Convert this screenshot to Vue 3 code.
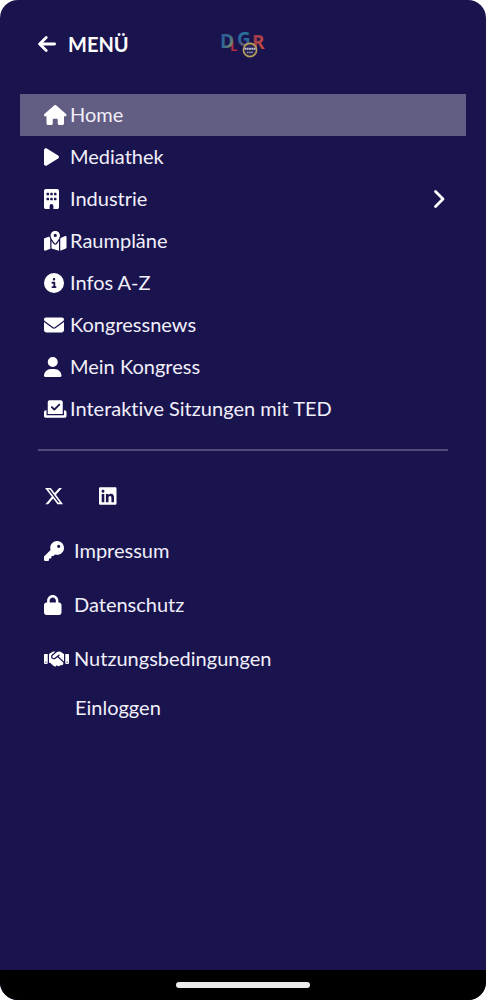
<script setup>
import { ref } from 'vue'

const mainItems = [
  { label: 'Home', w: 576, d: 'M575.8 255.5c0 18-15 32.1-32 32.1h-32l.7 160.2c0 2.7-.2 5.4-.5 8.1V472c0 22.1-17.9 40-40 40H456c-1.1 0-2.2 0-3.3-.1c-1.4 .1-2.8 .1-4.2 .1H416 392c-22.1 0-40-17.9-40-40V448 384c0-17.7-14.3-32-32-32H256c-17.7 0-32 14.3-32 32v64 24c0 22.1-17.9 40-40 40H160 128.1c-1.5 0-3-.1-4.5-.2c-1.2 .1-2.4 .2-3.6 .2H104c-22.1 0-40-17.9-40-40V360c0-.9 0-1.9 .1-2.8V287.6H32c-18 0-32-14-32-32.1c0-9 3-17 10-24L266.4 8c7-7 15-8 22-8s15 2 21 7L564.8 231.5c8 7 12 15 11 24z' },
  { label: 'Mediathek', w: 384, d: 'M73 39c-14.8-9.1-33.4-9.4-48.5-.9S0 62.6 0 80V432c0 17.4 9.4 33.4 24.5 41.9s33.7 8.1 48.5-.9L361 297c14.3-8.7 23-24.2 23-41s-8.7-32.2-23-41L73 39z' },
  { label: 'Industrie', more: true, w: 384, d: 'M48 0C21.5 0 0 21.5 0 48V464c0 26.5 21.5 48 48 48h96V432c0-26.5 21.5-48 48-48s48 21.5 48 48v80h96c26.5 0 48-21.5 48-48V48c0-26.5-21.5-48-48-48H48zM64 240c0-8.8 7.2-16 16-16h32c8.8 0 16 7.2 16 16v32c0 8.8-7.2 16-16 16H80c-8.8 0-16-7.2-16-16V240zm112-16h32c8.8 0 16 7.2 16 16v32c0 8.8-7.2 16-16 16H176c-8.8 0-16-7.2-16-16V240c0-8.8 7.2-16 16-16zm80 16c0-8.8 7.2-16 16-16h32c8.8 0 16 7.2 16 16v32c0 8.8-7.2 16-16 16H272c-8.8 0-16-7.2-16-16V240zM80 96h32c8.8 0 16 7.2 16 16v32c0 8.8-7.2 16-16 16H80c-8.8 0-16-7.2-16-16V112c0-8.8 7.2-16 16-16zm80 16c0-8.8 7.2-16 16-16h32c8.8 0 16 7.2 16 16v32c0 8.8-7.2 16-16 16H176c-8.8 0-16-7.2-16-16V112zM272 96h32c8.8 0 16 7.2 16 16v32c0 8.8-7.2 16-16 16H272c-8.8 0-16-7.2-16-16V112c0-8.8 7.2-16 16-16z' },
  { label: 'Raumpläne', w: 576, d: 'M408 120c0 54.6-73.1 151.9-105.2 192c-7.7 9.6-22 9.6-29.6 0C241.1 271.9 168 174.6 168 120C168 53.7 221.7 0 288 0s120 53.7 120 120zm8 80.4c3.5-6.9 6.7-13.8 9.6-20.6c.5-1.2 1-2.5 1.5-3.7l116-46.4C558.9 123.4 576 135 576 152V422.8c0 9.8-6 18.6-15.1 22.3L416 503V200.4zM137.6 138.3c2.4 14.1 7.2 28.3 12.8 41.5c2.9 6.8 6.1 13.7 9.6 20.6V451.8L32.9 502.7C17.1 509 0 497.4 0 480.4V209.6c0-9.8 6-18.6 15.1-22.3l122.6-49zM327.8 332c13.9-17.4 35.7-45.7 56.2-77V504.3L192 449.4V255c20.5 31.3 42.3 59.6 56.2 77c20.5 25.6 59.1 25.6 79.6 0zM288 152a40 40 0 1 0 0-80 40 40 0 1 0 0 80z' },
  { label: 'Infos A-Z', w: 512, d: 'M256 512A256 256 0 1 0 256 0a256 256 0 1 0 0 512zM216 336h24V272H216c-13.3 0-24-10.7-24-24s10.7-24 24-24h48c13.3 0 24 10.7 24 24v88h8c13.3 0 24 10.7 24 24s-10.7 24-24 24H216c-13.3 0-24-10.7-24-24s10.7-24 24-24zm40-208a32 32 0 1 1 0 64 32 32 0 1 1 0-64z' },
  { label: 'Kongressnews', w: 512, d: 'M48 64C21.5 64 0 85.5 0 112c0 15.1 7.1 29.3 19.2 38.4L236.8 313.6c11.4 8.5 27 8.5 38.4 0L492.8 150.4c12.1-9.1 19.2-23.3 19.2-38.4c0-26.5-21.5-48-48-48H48zM0 176V384c0 35.3 28.7 64 64 64H448c35.3 0 64-28.7 64-64V176L294.4 339.2c-22.8 17.1-54 17.1-76.8 0L0 176z' },
  { label: 'Mein Kongress', w: 448, d: 'M224 256A128 128 0 1 0 224 0a128 128 0 1 0 0 256zm-45.7 48C79.8 304 0 383.8 0 482.3C0 498.7 13.3 512 29.7 512H418.3c16.4 0 29.7-13.3 29.7-29.7C448 383.8 368.2 304 269.7 304H178.3z' },
  { label: 'Interaktive Sitzungen mit TED', w: 576, d: 'M96 80c0-26.5 21.5-48 48-48H432c26.5 0 48 21.5 48 48V384H96V80zm313 47c-9.4-9.4-24.6-9.4-33.9 0l-111 111-47-47c-9.4-9.4-24.6-9.4-33.9 0s-9.4 24.6 0 33.9l64 64c9.4 9.4 24.6 9.4 33.9 0L409 161c9.4-9.4 9.4-24.6 0-33.9zM0 336c0-26.5 21.5-48 48-48H64V416H512V288h16c26.5 0 48 21.5 48 48v96c0 26.5-21.5 48-48 48H48c-26.5 0-48-21.5-48-48V336z' },
]

const socialItems = [
  { label: 'X', w: 512, d: 'M389.2 48h70.6L305.6 224.2 487 464H345L233.7 318.6 106.5 464H35.8L200.7 275.5 26.8 48H172.4L272.9 180.9 389.2 48zM364.4 421.8h39.1L151.1 88h-42L364.4 421.8z' },
  { label: 'LinkedIn', w: 448, d: 'M416 32H31.9C14.3 32 0 46.5 0 64.3v383.4C0 465.5 14.3 480 31.9 480H416c17.6 0 32-14.5 32-32.3V64.3c0-17.8-14.4-32.3-32-32.3zM135.4 416H69V202.2h66.5V416zm-33.2-243c-21.3 0-38.5-17.3-38.5-38.5S80.9 96 102.2 96c21.2 0 38.5 17.3 38.5 38.5 0 21.3-17.2 38.5-38.5 38.5zm282.1 243h-66.4V312c0-24.8-.5-56.7-34.5-56.7-34.6 0-39.9 27-39.9 54.9V416h-66.4V202.2h63.7v29.2h.9c8.9-16.8 30.6-34.5 62.9-34.5 67.2 0 79.7 44.3 79.7 101.9V416z' },
]

const legalItems = [
  { label: 'Impressum', w: 512, d: 'M336 352c97.2 0 176-78.8 176-176S433.2 0 336 0S160 78.8 160 176c0 18.7 2.9 36.8 8.3 53.7L7 391c-4.5 4.5-7 10.6-7 17v80c0 13.3 10.7 24 24 24h80c13.3 0 24-10.7 24-24V448h40c13.3 0 24-10.7 24-24V384h40c6.4 0 12.5-2.5 17-7l33.3-33.3c16.9 5.4 35 8.3 53.7 8.3zM376 96a40 40 0 1 1 0 80 40 40 0 1 1 0-80z' },
  { label: 'Datenschutz', w: 448, d: 'M144 144v48H304V144c0-44.2-35.8-80-80-80s-80 35.8-80 80zM80 192V144C80 64.5 144.5 0 224 0s144 64.5 144 144v48h16c35.3 0 64 28.7 64 64V448c0 35.3-28.7 64-64 64H64c-35.3 0-64-28.7-64-64V256c0-35.3 28.7-64 64-64H80z' },
  { label: 'Nutzungsbedingungen', w: 640, d: 'M323.4 85.2l-96.8 78.4c-16.1 13-19.2 36.4-7 53.1c12.9 17.8 38 21.3 55.3 7.8l99.3-77.2c7-5.4 17-4.2 22.5 2.8s4.2 17-2.8 22.5l-20.9 16.2L512 316.8V128h-.7l-3.9-2.5L434.8 79c-15.3-9.8-33.2-15-51.4-15c-21.8 0-43 7.5-60 21.2zm22.8 124.4l-51.7 40.2C263 274.3 217.3 268 193.7 235.6c-22.2-30.5-16.6-73.1 12.7-96.8l83.2-67.3c-11.6-4.9-24.1-7.4-36.8-7.4C234 64 215.7 69.6 200 80l-72 48V352h28.2l91.4 83.4c19.6 17.9 49.9 16.5 67.8-3.1c5.5-6.1 9.2-13.2 11.1-20.6l17 15.6c19.5 17.9 49.9 16.6 67.8-2.9c4.5-4.9 7.8-10.6 9.9-16.5c19.4 13 45.8 10.3 62.1-7.5c17.9-19.5 16.6-49.9-2.9-67.8l-134.2-123zM16 128c-8.8 0-16 7.2-16 16V352c0 17.7 14.3 32 32 32H64c17.7 0 32-14.3 32-32V128H16zM48 320a16 16 0 1 1 0 32 16 16 0 1 1 0-32zM544 128V352c0 17.7 14.3 32 32 32h32c17.7 0 32-14.3 32-32V144c0-8.8-7.2-16-16-16H544zm32 208a16 16 0 1 1 32 0 16 16 0 1 1 -32 0z' },
]

const active = ref('Home')
</script>

<template>
  <div class="screen">
    <header class="top">
      <button class="back" type="button">
        <svg class="arrow" viewBox="0 0 18 18" aria-hidden="true"><path d="M16.6 9H1.8M8.2 2.4L1.6 9l6.6 6.6" /></svg>
        <span>MENÜ</span>
      </button>
      <svg class="logo" viewBox="0 0 48 36" role="img" aria-label="DLGR Kongress">
        <defs>
          <linearGradient id="fillD" x1="0" y1="0" x2="1" y2="1">
            <stop offset="0" stop-color="#2c4f9a" /><stop offset=".5" stop-color="#326b91" /><stop offset="1" stop-color="#c9a83e" />
          </linearGradient>
          <linearGradient id="fillG" x1="0" y1="0" x2="0" y2="1">
            <stop offset="0" stop-color="#2b8098" /><stop offset=".55" stop-color="#28629a" /><stop offset="1" stop-color="#c44a3c" />
          </linearGradient>
          <linearGradient id="fillR" x1="0" y1="0" x2="1" y2="1">
            <stop offset="0" stop-color="#8c3452" /><stop offset="1" stop-color="#d4503c" />
          </linearGradient>
        </defs>
        <text class="letter small" x="11" y="25" fill="#b02c40">L</text>
        <text class="letter" x="1" y="22" fill="url(#fillD)">D</text>
        <text class="letter" x="18" y="20" fill="url(#fillG)">G</text>
        <text class="letter" x="33" y="23" fill="url(#fillR)">R</text>
        <circle cx="31" cy="24" r="6.6" fill="#282457" stroke="#b5a05a" stroke-width="1.6" />
        <path d="M25.5 22.8h11" stroke="#c9c6d4" stroke-width="2" stroke-dasharray="1.8 .5" />
        <path d="M28 26.4h6" stroke="#a8a4b8" stroke-width="1.2" stroke-dasharray="1.5 .6" />
      </svg>
    </header>

    <main class="content">
      <nav aria-label="Hauptmenü">
        <ul class="list">
          <li v-for="item in mainItems" :key="item.label">
            <a class="row" :class="{ active: active === item.label }" href="#" @click.prevent="active = item.label">
              <span class="slot"><svg class="icon" :viewBox="`0 0 ${item.w} 512`" aria-hidden="true"><path :d="item.d" /></svg></span>
              <span class="label">{{ item.label }}</span>
              <svg v-if="item.more" class="chevron" viewBox="0 0 12 20" aria-hidden="true"><path d="M2.5 2.5L10 10l-7.5 7.5" /></svg>
            </a>
          </li>
        </ul>
      </nav>

      <hr class="rule" />

      <div class="social">
        <a v-for="item in socialItems" :key="item.label" href="#" :aria-label="item.label">
          <svg class="icon" :viewBox="`0 0 ${item.w} 512`" aria-hidden="true"><path :d="item.d" /></svg>
        </a>
      </div>

      <ul class="list legal">
        <li v-for="item in legalItems" :key="item.label">
          <a class="row" href="#">
            <span class="slot"><svg class="icon" :viewBox="`0 0 ${item.w} 512`" aria-hidden="true"><path :d="item.d" /></svg></span>
            <span class="label">{{ item.label }}</span>
          </a>
        </li>
      </ul>
      <a class="login" href="#">Einloggen</a>
    </main>

    <footer class="system"><span class="handle"></span></footer>
  </div>
</template>

<style>
body {
  margin: 0;
  background: #fff;
}
</style>

<style scoped>
.screen {
  box-sizing: border-box;
  display: flex;
  flex-direction: column;
  min-height: 100vh;
  overflow: hidden;
  border-radius: 18px;
  background: #1a144e;
  color: #f1effa;
  font-family: Lato, "Liberation Sans", sans-serif;
  font-size: 20px;
  font-variant-ligatures: none;
  line-height: 24px;
}
.top {
  display: grid;
  grid-template-columns: 1fr auto 1fr;
  align-items: center;
  height: 88px;
  padding: 0 38px;
}
.back {
  display: flex;
  align-items: center;
  justify-self: start;
  gap: 12px;
  padding: 0;
  border: 0;
  background: none;
  color: #fff;
  font: inherit;
  font-weight: 700;
  cursor: pointer;
}
.arrow {
  width: 18px;
  height: 18px;
}
.arrow path,
.chevron path {
  fill: none;
  stroke: #fff;
  stroke-width: 2.8;
  stroke-linecap: round;
  stroke-linejoin: round;
}
.logo {
  width: 48px;
  height: 36px;
  overflow: visible;
}
.letter {
  font-family: "Open Sans", Lato, sans-serif;
  font-size: 19px;
  font-weight: 700;
}
.small {
  font-size: 13px;
}
.content {
  flex: 1;
  padding: 6px 20px 24px;
}
.list {
  margin: 0;
  padding: 0;
  list-style: none;
}
.row {
  display: flex;
  align-items: center;
  height: 42px;
  padding: 0 21px 0 24px;
  color: inherit;
  text-decoration: none;
}
.row.active {
  background: #625d83;
}
.slot {
  display: flex;
  flex: none;
  width: 26px;
}
.icon {
  display: block;
  height: 20px;
  fill: #fff;
}
.label {
  flex: 1;
  padding-bottom: 2px;
}
.chevron {
  width: 12px;
  height: 20px;
}
.rule {
  height: 2px;
  margin: 19px 18px 35px;
  border: 0;
  background: #514b7b;
}
.social {
  display: flex;
  gap: 35px;
  padding: 0 24px;
}
.legal .row {
  height: 54px;
}
.legal {
  padding-top: 18px;
}
.legal .slot {
  width: 30px;
}
.login {
  display: inline-block;
  margin: 9px 55px 0;
  color: inherit;
  text-decoration: none;
}
.system {
  display: flex;
  align-items: center;
  justify-content: center;
  height: 30px;
  background: #000;
}
.handle {
  width: 134px;
  height: 6px;
  border-radius: 3px;
  background: #eeebee;
}
</style>
